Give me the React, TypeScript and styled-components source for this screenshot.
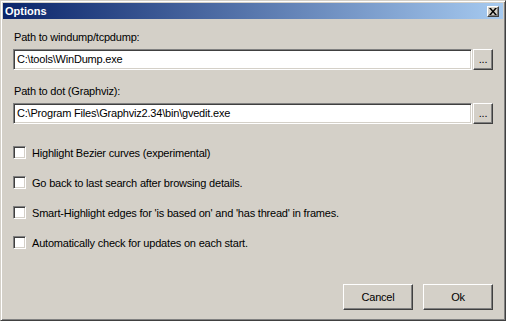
import React from 'react';
import styled, { createGlobalStyle } from 'styled-components';

const GlobalStyle = createGlobalStyle`
  html, body {
    margin: 0;
    padding: 0;
    background: #d4d0c8;
  }
  body {
    font-family: "Liberation Sans", Arial, sans-serif;
    font-size: 11px;
    letter-spacing: -0.2px;
    color: #000;
  }
`;

const Window = styled.div`
  width: 506px;
  height: 321px;
  box-sizing: border-box;
  background: #d4d0c8;
  border: 1px solid;
  border-color: #d4d0c8 #404040 #404040 #d4d0c8;
  box-shadow: inset 1px 1px #ffffff, inset -1px -1px #808080;
  padding: 2px;
  display: flex;
  flex-direction: column;
`;

const TitleBar = styled.div`
  height: 16px;
  display: flex;
  align-items: center;
  justify-content: space-between;
  padding: 0 2px 0 2px;
  background: linear-gradient(to right, #0a246a, #a6caf0);
`;

const TitleText = styled.span`
  color: #fff;
  font-weight: bold;
  font-size: 11px;
  letter-spacing: 0;
  line-height: 16px;
`;

const CloseButton = styled.div`
  width: 12px;
  height: 11px;
  box-sizing: border-box;
  background: #d4d0c8;
  border: 1px solid;
  border-color: #fff #404040 #404040 #fff;
  box-shadow: inset -1px -1px #808080;
  display: flex;
  align-items: center;
  justify-content: center;
  margin-right: 2px;
`;

const Content = styled.div`
  flex: 1;
  display: flex;
  flex-direction: column;
  padding: 12px 10px 8px 10px;
`;

const Label = styled.div`
  line-height: 13px;
  margin-left: 1px;
  margin-bottom: 5px;
`;

const PathRow = styled.div<{ $gapAfter: number }>`
  display: flex;
  height: 21px;
  margin-bottom: ${(p) => p.$gapAfter}px;
`;

const TextInput = styled.div`
  flex: 1;
  box-sizing: border-box;
  background: #fff;
  border: 1px solid;
  border-color: #808080 #ffffff #ffffff #808080;
  box-shadow: inset 1px 1px #404040, inset -1px -1px #d4d0c8;
  padding: 0 3px;
  line-height: 19px;
  white-space: nowrap;
  overflow: hidden;
`;

const Raised = styled.div`
  box-sizing: border-box;
  background: #d4d0c8;
  border: 1px solid;
  border-color: #ffffff #404040 #404040 #ffffff;
  box-shadow: inset -1px -1px #808080;
  display: flex;
  align-items: center;
  justify-content: center;
`;

const BrowseButton = styled(Raised)`
  width: 20px;
  margin-left: 1px;
  padding-bottom: 2px;
`;

const CheckList = styled.div`
  display: flex;
  flex-direction: column;
  gap: 17px;
`;

const CheckRow = styled.div`
  display: flex;
  align-items: center;
  height: 13px;
  gap: 6px;
`;

const CheckBox = styled.div`
  width: 13px;
  height: 13px;
  box-sizing: border-box;
  background: #fff;
  border: 1px solid;
  border-color: #808080 #ffffff #ffffff #808080;
  box-shadow: inset 1px 1px #404040, inset -1px -1px #d4d0c8;
`;

const ButtonRow = styled.div`
  margin-top: auto;
  display: flex;
  justify-content: flex-end;
  gap: 10px;
`;

const DialogButton = styled(Raised)`
  width: 70px;
  height: 26px;
`;

const options = [
  'Highlight Bezier curves (experimental)',
  'Go back to last search after browsing details.',
  "Smart-Highlight edges for 'is based on' and 'has thread' in frames.",
  'Automatically check for updates on each start.',
];

export default function App() {
  return (
    <>
      <GlobalStyle />
      <Window>
        <TitleBar>
          <TitleText>Options</TitleText>
          <CloseButton>
            <svg width="8" height="7" viewBox="0 0 8 7">
              <path d="M0 0h2l2 2.5L6 0h2L5 3.5L8 7H6L4 4.5L2 7H0l3-3.5z" fill="#000" />
            </svg>
          </CloseButton>
        </TitleBar>
        <Content>
          <Label>Path to windump/tcpdump:</Label>
          <PathRow $gapAfter={15}>
            <TextInput>C:\tools\WinDump.exe</TextInput>
            <BrowseButton>...</BrowseButton>
          </PathRow>
          <Label>Path to dot (Graphviz):</Label>
          <PathRow $gapAfter={22}>
            <TextInput>C:\Program Files\Graphviz2.34\bin\gvedit.exe</TextInput>
            <BrowseButton>...</BrowseButton>
          </PathRow>
          <CheckList>
            {options.map((o) => (
              <CheckRow key={o}>
                <CheckBox />
                <span>{o}</span>
              </CheckRow>
            ))}
          </CheckList>
          <ButtonRow>
            <DialogButton>Cancel</DialogButton>
            <DialogButton>Ok</DialogButton>
          </ButtonRow>
        </Content>
      </Window>
    </>
  );
}
